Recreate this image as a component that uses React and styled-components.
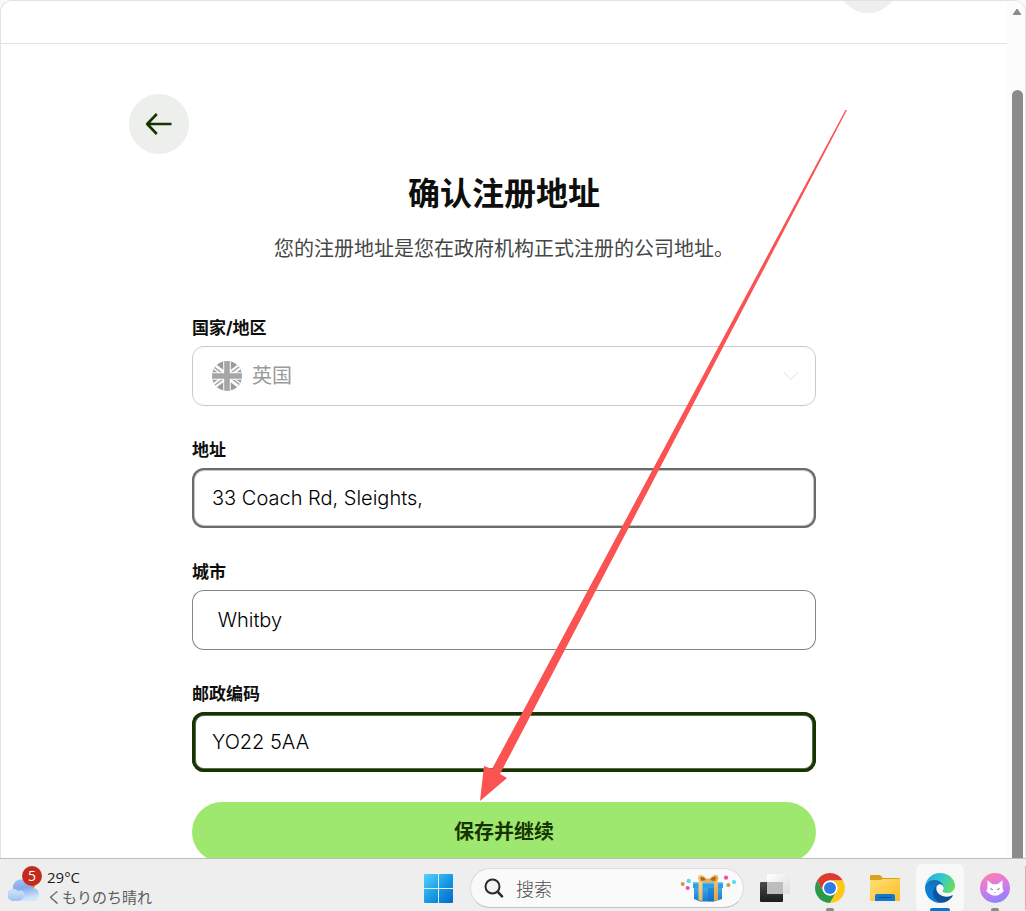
import React, { useState } from 'react'
import styled, { createGlobalStyle } from 'styled-components'

const GlobalStyle = createGlobalStyle`
* { box-sizing: border-box; }
body {
  margin: 0;
  background: #fafafa;
  font-family: Inter, "Noto Sans CJK SC", sans-serif;
  color: #0e0f0c;
}
`

const Desktop = styled.div`
display: flex;
flex-direction: column;
height: 100vh;
overflow: hidden;
`

const Browser = styled.div`
flex: 1;
min-height: 0;
display: flex;
border: 1px solid #e2e2e2;
border-bottom: none;
border-radius: 12px 12px 0 0;
background: white;
overflow: hidden;
`

const Page = styled.div`
flex: 1;
min-width: 0;
position: relative;
overflow: hidden;
`

const Header = styled.header`
display: flex;
justify-content: flex-end;
align-items: flex-end;
height: 43px;
padding: 0 109px 30px 0;
border-bottom: 1px solid #e0e2df;
overflow: hidden;
`

const Avatar = styled.div`
flex: none;
width: 60px;
height: 60px;
border-radius: 50%;
background: #ecefeb;
`

const Main = styled.main`
max-width: 750px;
margin: 0 auto;
padding-top: 50px;
`

const BackButton = styled.button`
display: flex;
align-items: center;
justify-content: center;
width: 60px;
height: 60px;
border: none;
border-radius: 50%;
background: #ecefeb;
cursor: pointer;
`

const Title = styled.h1`
margin: 20px 0 0;
font-size: 32px;
line-height: 40px;
font-weight: 700;
text-align: center;
`

const Subtitle = styled.p`
margin: 21px 0 53px;
font-size: 20px;
line-height: 28px;
text-align: center;
color: #454745;
`

const Form = styled.form`
display: flex;
flex-direction: column;
max-width: 624px;
margin: 0 auto;
`

const Field = styled.div`
display: flex;
flex-direction: column;
gap: 6px;
margin-bottom: ${(props) => (props.$last ? '30px' : '32px')};
`

const Label = styled.label`
font-size: 17px;
line-height: 24px;
font-weight: 700;
`

const rings = {
  normal: 'inset 0 0 0 1px #868685',
  hover: 'inset 0 0 0 2px #6a6c6a, inset 0 0 0 3px #c4c5c4',
  focus: 'inset 0 0 0 3px #163300, inset 0 0 0 4px #5c704d',
}

const Input = styled.input`
width: 100%;
height: 60px;
padding: 0 20px;
border: none;
outline: none;
border-radius: 12px;
background: white;
box-shadow: ${(props) => rings[props.$state || 'normal']};
font: inherit;
font-size: 20px;
font-weight: 300;
color: #000;
`

const SelectBox = styled.div`
display: flex;
align-items: center;
gap: 10px;
height: 60px;
padding: 0 16px 0 19px;
border: 1px solid #c9cac9;
border-radius: 12px;
`

const Select = styled.select`
flex: 1;
min-width: 0;
appearance: none;
border: none;
padding: 0;
background: none;
font: inherit;
font-size: 20px;
line-height: 28px;
color: #999a99;
opacity: 1;
`

const Submit = styled.button`
height: 60px;
padding: 0 0 3px;
border: none;
border-radius: 30px;
background: #9fe870;
color: #163300;
font: inherit;
font-size: 20px;
font-weight: 700;
cursor: pointer;
`

// drawn over the form
const Arrow = styled.svg`
position: absolute;
left: calc(50% - 25px);
top: 108px;
pointer-events: none;
`

const ScrollTrack = styled.div`
display: flex;
flex-direction: column;
align-items: center;
width: 18px;
padding: 6px 0 0 2px;
background: #fcfcfc;
`

const ScrollThumb = styled.div`
flex: 1;
width: 11px;
margin-top: 74px;
border-radius: 6px 6px 0 0;
background: #8b8b8b;
`

const Taskbar = styled.footer`
flex: none;
display: flex;
align-items: flex-start;
height: 53px;
padding-top: 5px;
border-top: 1px solid #bcbcbc;
background: #eeeeee;
overflow: hidden;
`

const Weather = styled.div`
display: flex;
align-items: center;
gap: 7px;
padding-left: 8px;
height: 46px;
margin-right: auto;
font-family: "Open Sans", "Noto Sans CJK JP", sans-serif;
font-size: 15px;
line-height: 20px;
color: #5c5c5c;
white-space: nowrap;
`

const WeatherIcon = styled.div`
position: relative;
width: 32px;
height: 40px;
`

const Badge = styled.span`
position: absolute;
left: 14px;
top: -1px;
width: 20px;
height: 20px;
border-radius: 50%;
background: #c42b1c;
color: white;
font-size: 14px;
line-height: 20px;
text-align: center;
`

const Temperature = styled.div`
font-size: 15px;
color: #1b1b1b;
`

const TaskButton = styled.button`
position: relative;
flex: none;
display: flex;
align-items: center;
justify-content: center;
width: 48px;
height: 48px;
margin-left: 7px;
padding: 0;
border: none;
border-radius: 6px;
background: ${(props) => (props.$active ? '#f8f8f8' : 'none')};
`

const Indicator = styled.span`
position: absolute;
bottom: 0;
left: 50%;
transform: translateX(-50%);
width: ${(props) => (props.$active ? '20px' : '8px')};
height: 4px;
border-radius: 2px;
background: ${(props) => (props.$active ? '#0078d4' : '#8a8a8a')};
`

const SearchBox = styled.label`
flex: none;
display: flex;
align-items: center;
gap: 12px;
width: 274px;
height: 40px;
margin: 4px 0 0 8px;
padding: 0 5px 0 13px;
border: 1px solid #dcdcdc;
border-bottom-color: #c4c4c4;
border-radius: 20px;
background: #fafafa;
`

const SearchInput = styled.input`
flex: 1;
min-width: 0;
border: none;
outline: none;
padding: 0;
background: none;
font-family: "Noto Sans CJK SC", sans-serif;
font-size: 18px;
font-weight: 300;
&::placeholder {
  color: #4c4c4c;
  opacity: 1;
}
`

const NextApp = styled.div`
flex: none;
width: 1px;
height: 44px;
margin: 2px 0 0 6px;
background: #eda3ae;
`

const BackIcon = () => (
  <svg width="28" height="24" viewBox="0 0 28 24" fill="none" stroke="#163300" strokeWidth="2.6">
    <path d="M26.500 12H3M11.800 2L2.200 12L11.800 22" strokeLinejoin="round" />
  </svg>
)

const UkFlag = () => (
  <svg width="30" height="30" viewBox="0 0 30 30">
    <clipPath id="flag"><circle cx="15" cy="15" r="15" /></clipPath>
    <g clipPath="url(#flag)">
      <rect width="30" height="30" fill="#9b9b9b" />
      <path d="M-1 3L31 27M31 3L-1 27" stroke="#fff" strokeWidth="5.4" />
      <path d="M-1 3.8L15 15.8M31 3L15 15M31 26.2L15 14.2M-1 27L15 15" stroke="#a6a6a6" strokeWidth="1.5" />
      <path d="M15 0V30M0 15H30" stroke="#fff" strokeWidth="7.6" />
      <path d="M15 0V30M0 15H30" stroke="#a6a6a6" strokeWidth="5.6" />
    </g>
  </svg>
)

const ChevronIcon = () => (
  <svg width="16" height="10" viewBox="0 0 16 10" fill="none" stroke="#ececec" strokeWidth="1.2">
    <path d="M1 1.5L8 8.5L15 1.5" />
  </svg>
)

const CloudIcon = () => (
  <svg width="32" height="40" viewBox="0 0 32 40">
    <defs>
      <linearGradient id="cloud" x1="0" y1="0" x2="0.3" y2="1">
        <stop offset="0" stopColor="#a9c8f5" />
        <stop offset="0.5" stopColor="#84a9ea" />
        <stop offset="1" stopColor="#cfe6fb" />
      </linearGradient>
      <linearGradient id="cloud2" x1="0" y1="0" x2="0" y2="1">
        <stop offset="0" stopColor="#d3e4fb" />
        <stop offset="1" stopColor="#9fc1f3" />
      </linearGradient>
    </defs>
    <circle cx="22" cy="16" r="6" fill="#f0830f" />
    <path d="M6 34a6 6 0 0 1-1-12a8 8 0 0 1 14.500-6a7.500 7.500 0 0 1 5.500 5a6.500 6.500 0 0 1-1 13z" fill="url(#cloud)" />
    <path d="M6 34a6 6 0 1 1 4-10a6 6 0 0 1 7 2.500c-1 4-3 7.500-7 7.500z" fill="url(#cloud2)" />
  </svg>
)

const StartIcon = () => (
  <svg width="29" height="29" viewBox="0 0 29 29">
    <defs>
      <linearGradient id="win" gradientUnits="userSpaceOnUse" x1="0" y1="0" x2="30" y2="30">
        <stop offset="0" stopColor="#56d2fb" />
        <stop offset="0.5" stopColor="#189be4" />
        <stop offset="1" stopColor="#0067c8" />
      </linearGradient>
    </defs>
    <path d="M1 0H14V14H0V1A1 1 0 0 1 1 0ZM15 0H28A1 1 0 0 1 29 1V14H15ZM0 15H14V29H1A1 1 0 0 1 0 28ZM15 15H29V28A1 1 0 0 1 28 29H15Z" fill="url(#win)" />
  </svg>
)

const SearchIcon = () => (
  <svg width="20" height="20" viewBox="0 0 20 20" fill="none" stroke="#2b2b2b" strokeLinecap="round">
    <circle cx="8.500" cy="8.500" r="7" strokeWidth="2" fill="#f0f2f5" />
    <path d="M13.800 13.800L18 18.300" strokeWidth="2.600" />
  </svg>
)

const GiftIcon = () => (
  <svg width="58" height="30" viewBox="0 0 58 30">
    <defs>
      <linearGradient id="box" x1="0" y1="0" x2="0" y2="1">
        <stop offset="0" stopColor="#43b5f5" />
        <stop offset="1" stopColor="#1479cf" />
      </linearGradient>
      <linearGradient id="ribbon" x1="0" y1="0" x2="1" y2="1">
        <stop offset="0" stopColor="#ffd681" />
        <stop offset="1" stopColor="#dfa044" />
      </linearGradient>
    </defs>
    <path d="M14 12H42V26L34 28.500H20L14 26Z" fill="url(#box)" />
    <path d="M28 15H34V28.500H28Z" fill="#0f69bd" opacity=".45" />
    <path d="M13 9H43V15H13Z" fill="#2d9fe9" />
    <path d="M13 9H43V10.500H13Z" fill="#6fcbfb" />
    <path d="M18.500 9H22.500V28L18.500 27.300ZM34 9H38V27.300L34 28Z" fill="url(#ribbon)" />
    <path d="M28 8C25 2 21 1 19 2C17 4 18 8 20 9H36C39 8 39 3 37 2C34 1 31 3 28 8Z" fill="url(#ribbon)" />
    <path d="M26 7C24 4 22 3.500 20.500 4C20 6 21 7.500 22 8ZM30 7C32 4 34 3.500 36 4C36 6 35 7.500 34 8Z" fill="#a8672b" />
    <rect x="26" y="5.500" width="4.500" height="4.500" rx="1" fill="#e8b252" />
    <circle cx="2.700" cy="11" r="2" fill="#c99a4a" />
    <circle cx="8.700" cy="8" r="2.200" fill="#55dbe9" />
    <circle cx="7.700" cy="15" r="2.100" fill="#ec4fa4" />
    <circle cx="46" cy="4.700" r="2.100" fill="#ec4fa4" />
    <circle cx="54" cy="9" r="2.100" fill="#55dbe9" />
    <circle cx="48.300" cy="12" r="2" fill="#c99a4a" />
  </svg>
)

const TaskViewIcon = () => (
  <svg width="30" height="28" viewBox="0 0 30 28">
    <defs>
      <linearGradient id="dark" x1="0" y1="0" x2="0" y2="1">
        <stop offset="0" stopColor="#4a4a4a" />
        <stop offset="1" stopColor="#1c1c1c" />
      </linearGradient>
      <linearGradient id="light" x1="0" y1="0" x2="1" y2="1">
        <stop offset="0" stopColor="#fff" />
        <stop offset="1" stopColor="#dcdcdc" />
      </linearGradient>
    </defs>
    <rect x="0" y="8" width="23" height="20" rx="1" fill="url(#dark)" />
    <rect x="7" y="0" width="23" height="20" rx="1" fill="url(#light)" />
    <rect x="7" y="8" width="16" height="12" fill="#bdbdbd" />
  </svg>
)

const ChromeIcon = () => (
  <svg width="30" height="30" viewBox="0 0 48 48">
    <path d="M24 12H44.780A24 24 0 0 0 3.220 12L13.610 30A12 12 0 0 1 24 12Z" fill="#df3a2e" />
    <path d="M13.610 30L3.220 12A24 24 0 0 0 24 48L34.390 30A12 12 0 0 1 13.610 30Z" fill="#2b9a48" />
    <path d="M34.390 30L24 48A24 24 0 0 0 44.780 12H24A12 12 0 0 1 34.390 30Z" fill="#fdc818" />
    <circle cx="24" cy="24" r="12" fill="#fff" />
    <circle cx="24" cy="24" r="9.600" fill="#2f7bea" />
  </svg>
)

const FolderIcon = () => (
  <svg width="30" height="30" viewBox="0 0 30 30">
    <defs>
      <linearGradient id="folder" x1="0" y1="0" x2="1" y2="1">
        <stop offset="0" stopColor="#ffdf76" />
        <stop offset="1" stopColor="#fbbd26" />
      </linearGradient>
    </defs>
    <path d="M0 3A1 1 0 0 1 1 2H10L13 5H29A1 1 0 0 1 30 6V12H0Z" fill="#dca11a" />
    <path d="M0 7H10L13 6H30V27A1 1 0 0 1 29 28H1A1 1 0 0 1 0 27Z" fill="url(#folder)" />
    <path d="M5 28V23A2 2 0 0 1 7 21H23A2 2 0 0 1 25 23V28Z" fill="#1477cf" />
    <path d="M9 24.500H21" stroke="#0b4f94" strokeWidth="1.200" strokeLinecap="round" />
  </svg>
)

const EdgeIcon = () => (
  <svg width="30" height="30" viewBox="0 0 256 256">
    <defs>
      <linearGradient id="e1" x1="0" y1="0" x2="1" y2="0">
        <stop offset="0" stopColor="#0c59a4" />
        <stop offset="1" stopColor="#114a8b" />
      </linearGradient>
      <linearGradient id="e2" x1="0.6" y1="0" x2="0.3" y2="1">
        <stop offset="0" stopColor="#1668ad" />
        <stop offset="0.5" stopColor="#0c7fd4" />
        <stop offset="1" stopColor="#0a80dc" />
      </linearGradient>
      <linearGradient id="e3" x1="0" y1="0.3" x2="1" y2="0.6">
        <stop offset="0" stopColor="#2ba9e8" />
        <stop offset="0.5" stopColor="#36c8cb" />
        <stop offset="1" stopColor="#66e05e" />
      </linearGradient>
    </defs>
    <g transform="translate(-4.630 -4.920)">
      <path fill="url(#e1)" d="M235.680 195.460a93.730 93.730 0 0 1-10.540 4.710 101.870 101.870 0 0 1-35.900 6.460c-47.320 0-88.540-32.550-88.540-74.320A31.480 31.480 0 0 1 117.130 105c-42.800 1.800-53.800 46.400-53.800 72.530 0 73.880 68.090 81.370 82.760 81.370 7.910 0 19.840-2.300 27-4.560l1.310-.44a128.340 128.340 0 0 0 66.600-52.800 4 4 0 0 0-5.320-5.640z" />
      <path fill="url(#e2)" d="M110.340 246.340A79.200 79.200 0 0 1 87.600 225a80.720 80.720 0 0 1 29.530-120c3.120-1.470 8.450-4.130 15.540-4a32.350 32.350 0 0 1 25.690 13 31.880 31.880 0 0 1 6.360 18.660c0-.21 24.460-79.600-80-79.600-43.900 0-80 41.660-80 78.210a130.150 130.150 0 0 0 12.110 56 128 128 0 0 0 156.380 67.110 75.550 75.550 0 0 1-62.780-8z" />
      <path fill="url(#e3)" d="M156.940 153.780c-.81 1.050-3.300 2.500-3.300 5.660 0 2.610 1.700 5.120 4.720 7.230 14.380 10 41.490 8.680 41.560 8.680a59.560 59.560 0 0 0 30.270-8.350 61.380 61.380 0 0 0 30.430-52.880c.26-22.410-8-37.310-11.340-43.910C228.090 28.760 182.350 4.920 132.610 4.920a128 128 0 0 0-128 126.200c.48-36.540 36.800-66.050 80-66.050 3.500 0 23.460.34 42 10.070 16.340 8.580 24.900 18.940 30.850 29.210 6.180 10.670 7.280 24.150 7.280 29.520s-2.740 13.330-7.800 19.910z" />
    </g>
  </svg>
)

const CatIcon = () => (
  <svg width="30" height="30" viewBox="0 0 30 30">
    <defs>
      <linearGradient id="cat" x1="0.3" y1="0" x2="0.6" y2="1">
        <stop offset="0" stopColor="#ff7fae" />
        <stop offset="0.5" stopColor="#d47bea" />
        <stop offset="1" stopColor="#8a83fb" />
      </linearGradient>
    </defs>
    <circle cx="15" cy="15" r="15" fill="url(#cat)" />
    <path d="M7.500 7.300L12.500 11.200H17.500L22.500 7.300L22.600 15.500L23.800 18L21 20.500L17.500 22.500H12.500L9 20.500L6.200 18L7.400 15.500Z" fill="#fff" />
    <path d="M10 14.500L13.500 16.800C12 18 10.300 17 10 14.500ZM20 14.500L16.500 16.800C18 18 19.700 17 20 14.500ZM14 19.300H16L15 20.300Z" fill="#b574e8" />
  </svg>
)

const App = () => {
    const [address, setAddress] = useState('33 Coach Rd, Sleights,')
    const [city, setCity] = useState(' Whitby')
    const [postcode, setPostcode] = useState('YO22 5AA')

    return (
        <Desktop>
            <GlobalStyle />
            <Browser>
                <Page>
                    <Header><Avatar /></Header>
                    <Main>
                        <BackButton aria-label="返回"><BackIcon /></BackButton>
                        <Title>确认注册地址</Title>
                        <Subtitle>您的注册地址是您在政府机构正式注册的公司地址。</Subtitle>
                        <Form onSubmit={(e) => e.preventDefault()}>
                            <Field>
                                <Label htmlFor="country">国家/地区</Label>
                                <SelectBox>
                                    <UkFlag />
                                    <Select id="country" disabled defaultValue="gb">
                                        <option value="gb">英国</option>
                                    </Select>
                                    <ChevronIcon />
                                </SelectBox>
                            </Field>
                            <Field>
                                <Label htmlFor="address">地址</Label>
                                <Input id="address" $state="hover" value={address} onChange={(e) => setAddress(e.target.value)} />
                            </Field>
                            <Field>
                                <Label htmlFor="city">城市</Label>
                                <Input id="city" value={city} onChange={(e) => setCity(e.target.value)} />
                            </Field>
                            <Field $last>
                                <Label htmlFor="postcode">邮政编码</Label>
                                <Input id="postcode" $state="focus" value={postcode} onChange={(e) => setPostcode(e.target.value)} />
                            </Field>
                            <Submit type="submit">保存并继续</Submit>
                        </Form>
                    </Main>
                    <Arrow width="370" height="694" viewBox="479 109 370 694" aria-hidden="true">
                        <path d="M845.500 110L847 110L500 774L507 778L480 801L484 766L492 769Z" fill="#fb5252" />
                    </Arrow>
                </Page>
                <ScrollTrack>
                    <svg width="10" height="9" viewBox="0 0 10 9">
                        <path d="M5 2L8.800 7.500H1.200Z" fill="#8b8b8b" stroke="#8b8b8b" strokeLinejoin="round" />
                    </svg>
                    <ScrollThumb />
                </ScrollTrack>
            </Browser>
            <Taskbar>
                <Weather>
                    <WeatherIcon>
                        <CloudIcon />
                        <Badge>5</Badge>
                    </WeatherIcon>
                    <div>
                        <Temperature>29°C</Temperature>
                        <div lang="ja">くもりのち晴れ</div>
                    </div>
                </Weather>
                <TaskButton aria-label="开始"><StartIcon /></TaskButton>
                <SearchBox>
                    <SearchIcon />
                    <SearchInput placeholder="搜索" aria-label="搜索" />
                    <GiftIcon />
                </SearchBox>
                <TaskButton aria-label="任务视图"><TaskViewIcon /></TaskButton>
                <TaskButton aria-label="Chrome"><ChromeIcon /><Indicator /></TaskButton>
                <TaskButton aria-label="文件资源管理器"><FolderIcon /></TaskButton>
                <TaskButton $active aria-label="Edge"><EdgeIcon /><Indicator $active /></TaskButton>
                <TaskButton aria-label="Cat"><CatIcon /><Indicator /></TaskButton>
                <NextApp />
            </Taskbar>
        </Desktop>
    )
}

export default App
